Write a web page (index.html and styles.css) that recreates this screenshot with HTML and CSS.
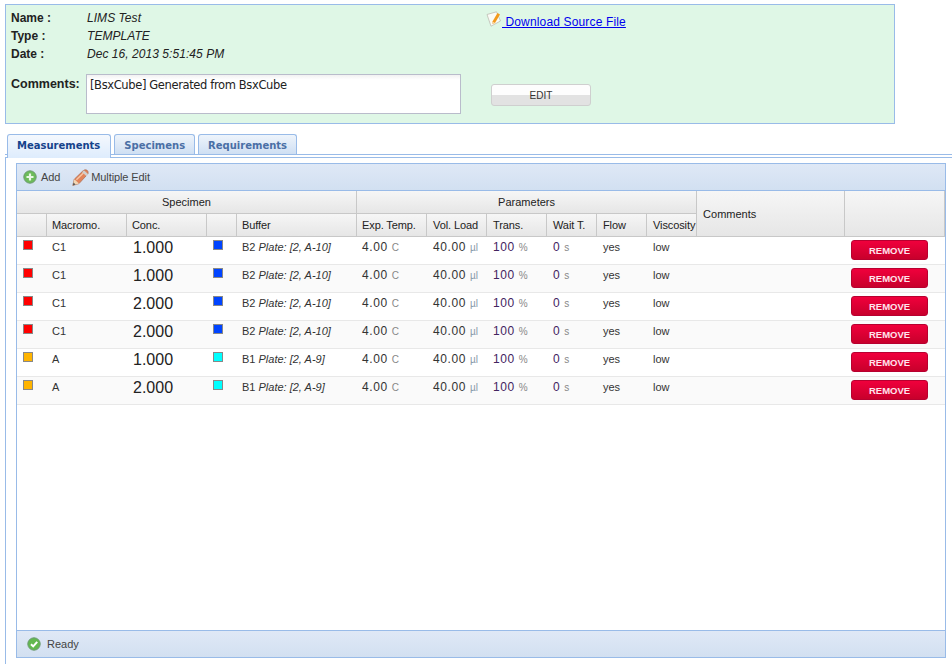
FILE: index.html
```html
<!DOCTYPE html>
<html>
  <head>
    <meta charset="utf-8" />
    <title>Experiment</title>
    <link rel="stylesheet" href="styles.css">
  </head>

  <body>
    <div class="summary">
      <div class="info">
        <div class="info-rows">
          <div class="info-row"><b>Name :</b><i>LIMS Test</i></div>
          <div class="info-row"><b>Type :</b><i>TEMPLATE</i></div>
          <div class="info-row"><b>Date :</b><i>Dec 16, 2013 5:51:45 PM</i></div>
        </div>
        <div class="comments">
          <b>Comments:</b>
          <div class="comments-box">[BsxCube] Generated from BsxCube</div>
        </div>
      </div>
      <div class="actions">
        <div class="download">
          <svg class="note-icon" width="16" height="16" viewBox="0 0 16 16">
            <path d="M1 3.5 L10.5 0.8 L14.5 10 L5 15.2 Z" fill="#fbfbf6" stroke="#bdbdb2" stroke-width="0.8"/>
            <path d="M6.5 10.5 L11.5 2 L14 3.4 L9 12 L6.5 13 Z" fill="#f39a1c"/>
            <path d="M6.5 10.5 L9 12 L6.5 13 Z" fill="#f7dcae"/>
          </svg>
          <a href="#">&nbsp;Download Source File</a>
        </div>
        <button class="edit-btn">EDIT</button>
      </div>
    </div>

    <div class="tabs">
      <span class="tab active">Measurements</span>
      <span class="tab">Specimens</span>
      <span class="tab">Requirements</span>
    </div>

    <div class="tab-body">
      <div class="grid-panel">
        <div class="toolbar">
          <span class="tool">
            <svg width="14" height="14" viewBox="0 0 14 14">
              <circle cx="7" cy="7" r="6.2" fill="#6cbb5a" stroke="#6d9a72"/>
              <path d="M7 3.5 V10.5 M3.5 7 H10.5" stroke="#e9f7e4" stroke-width="2.2"/>
            </svg>
            Add
          </span>
          <span class="tool">
            <svg width="17" height="17" viewBox="0 0 17 17">
              <path d="M0.8 16.4 L2.3 10.2 L11 1.8 Q12.8 0.2 14.8 1 Q16.8 2.6 16 4.8 L7 14.6 Z" fill="#e2835a" stroke="#a8694c" stroke-width="0.7"/>
              <path d="M4.4 10.8 L11.4 4" stroke="#f6c6a4" stroke-width="1.4"/>
              <path d="M11 2.2 L15.4 6.2" stroke="#cfcfcf" stroke-width="2.6"/>
              <path d="M0.8 16.4 L2.3 10.2 L7 14.6 Z" fill="#f2d7b5"/>
              <path d="M0.8 16.4 L1.5 13.6 L3.6 15.5 Z" fill="#555"/>
            </svg>
            Multiple Edit
          </span>
        </div>

        <table class="grid">
          <colgroup>
            <col class="c30"><col class="c80"><col class="c80"><col class="c30"><col class="c120">
            <col class="c70"><col class="c60"><col class="c60"><col class="c50"><col class="c50"><col class="c50">
            <col class="c148"><col class="c100">
          </colgroup>
          <thead>
            <tr class="group-row">
              <th colspan="5" class="center">Specimen</th>
              <th colspan="6" class="center">Parameters</th>
              <th rowspan="2" class="comments-head">Comments</th>
              <th rowspan="2"></th>
            </tr>
            <tr class="col-row">
              <th></th><th>Macromo.</th><th>Conc.</th><th></th><th>Buffer</th>
              <th>Exp. Temp.</th><th>Vol. Load</th><th>Trans.</th><th>Wait T.</th><th>Flow</th><th>Viscosity</th>
            </tr>
          </thead>
          <tbody>
            <tr>
              <td><span class="swatch red"></span></td><td>C1</td><td class="conc">1.000</td>
              <td><span class="swatch blue"></span></td><td>B2 <i>Plate: [2, A-10]</i></td>
              <td class="val">4.00 <span class="unit">C</span></td><td class="val">40.00 <span class="unit ul">µl</span></td><td class="val num">100 <span class="unit">%</span></td><td class="val num">0 <span class="unit">s</span></td><td>yes</td><td>low</td>
              <td></td><td><button class="remove-btn">REMOVE</button></td>
            </tr>
            <tr>
              <td><span class="swatch red"></span></td><td>C1</td><td class="conc">1.000</td>
              <td><span class="swatch blue"></span></td><td>B2 <i>Plate: [2, A-10]</i></td>
              <td class="val">4.00 <span class="unit">C</span></td><td class="val">40.00 <span class="unit ul">µl</span></td><td class="val num">100 <span class="unit">%</span></td><td class="val num">0 <span class="unit">s</span></td><td>yes</td><td>low</td>
              <td></td><td><button class="remove-btn">REMOVE</button></td>
            </tr>
            <tr>
              <td><span class="swatch red"></span></td><td>C1</td><td class="conc">2.000</td>
              <td><span class="swatch blue"></span></td><td>B2 <i>Plate: [2, A-10]</i></td>
              <td class="val">4.00 <span class="unit">C</span></td><td class="val">40.00 <span class="unit ul">µl</span></td><td class="val num">100 <span class="unit">%</span></td><td class="val num">0 <span class="unit">s</span></td><td>yes</td><td>low</td>
              <td></td><td><button class="remove-btn">REMOVE</button></td>
            </tr>
            <tr>
              <td><span class="swatch red"></span></td><td>C1</td><td class="conc">2.000</td>
              <td><span class="swatch blue"></span></td><td>B2 <i>Plate: [2, A-10]</i></td>
              <td class="val">4.00 <span class="unit">C</span></td><td class="val">40.00 <span class="unit ul">µl</span></td><td class="val num">100 <span class="unit">%</span></td><td class="val num">0 <span class="unit">s</span></td><td>yes</td><td>low</td>
              <td></td><td><button class="remove-btn">REMOVE</button></td>
            </tr>
            <tr>
              <td><span class="swatch orange"></span></td><td>A</td><td class="conc">1.000</td>
              <td><span class="swatch cyan"></span></td><td>B1 <i>Plate: [2, A-9]</i></td>
              <td class="val">4.00 <span class="unit">C</span></td><td class="val">40.00 <span class="unit ul">µl</span></td><td class="val num">100 <span class="unit">%</span></td><td class="val num">0 <span class="unit">s</span></td><td>yes</td><td>low</td>
              <td></td><td><button class="remove-btn">REMOVE</button></td>
            </tr>
            <tr>
              <td><span class="swatch orange"></span></td><td>A</td><td class="conc">2.000</td>
              <td><span class="swatch cyan"></span></td><td>B1 <i>Plate: [2, A-9]</i></td>
              <td class="val">4.00 <span class="unit">C</span></td><td class="val">40.00 <span class="unit ul">µl</span></td><td class="val num">100 <span class="unit">%</span></td><td class="val num">0 <span class="unit">s</span></td><td>yes</td><td>low</td>
              <td></td><td><button class="remove-btn">REMOVE</button></td>
            </tr>
          </tbody>
        </table>

        <div class="grid-space"></div>

        <div class="statusbar">
          <svg width="14" height="14" viewBox="0 0 14 14">
            <circle cx="7" cy="7" r="6.2" fill="#62b84f" stroke="#6d9a72"/>
            <path d="M4 7.2 L6.2 9.4 L10.2 4.8" fill="none" stroke="#fff" stroke-width="2"/>
          </svg>
          Ready
        </div>
      </div>
    </div>
  </body>
</html>
```

FILE: styles.css
```css
html, body {
  margin: 0;
  height: 667px;
  overflow: hidden;
  background: #fff;
}
body {
  font-family: "Liberation Sans", Arial, sans-serif;
  font-size: 11px;
  color: #222;
}
.summary {
  display: flex;
  box-sizing: border-box;
  width: 890px;
  height: 120px;
  margin: 4px 0 0 5px;
  border: 1px solid #99bbe8;
  background: #dff7e6;
}
.info {
  width: 481px;
  padding: 4px 0 0 5px;
  box-sizing: border-box;
}
.info-row {
  display: flex;
  height: 18px;
  line-height: 18px;
  font-size: 12px;
}
.info-row b {
  width: 75px;
}
.info-row i {
  padding-left: 1px;
  letter-spacing: 0.05px;
}
.comments {
  display: flex;
  margin-top: 11px;
  font-size: 12px;
}
.comments b {
  width: 75px;
  font-size: 12.5px;
  padding-top: 3px;
}
.comments-box {
  box-sizing: border-box;
  width: 375px;
  height: 40px;
  padding: 3px 3px;
  border: 1px solid #b9bccb;
  background: linear-gradient(#f2f2f2, #fff 5px);
  font-family: "DejaVu Sans", sans-serif;
  font-size: 11.5px;
  letter-spacing: -0.37px;
}
.actions {
  padding-top: 5px;
}
.download {
  display: flex;
  align-items: flex-start;
  height: 74px;
  font-size: 12px;
}
.download a {
  color: #0000ee;
  margin-top: 5px;
  letter-spacing: 0.15px;
}
.note-icon {
  margin-left: -1px;
  margin-top: 1px;
}
.edit-btn {
  display: block;
  box-sizing: border-box;
  width: 100px;
  height: 22px;
  margin-left: 4px;
  border: 1px solid #cfcfcf;
  border-radius: 3px;
  background: linear-gradient(#fdfdfd 50%, #e2e2e2 50%);
  font-family: "Liberation Sans", Arial, sans-serif;
  font-size: 10px;
  color: #333;
}
.tabs {
  display: flex;
  gap: 3px;
  height: 20px;
  margin: 10px 0 0 5px;
  padding-left: 2px;
  border-bottom: 1px solid #99bbe8;
}
.tab {
  box-sizing: border-box;
  height: 20px;
  padding: 5px 9px 0;
  border: 1px solid #99bbe8;
  border-bottom: 0;
  border-radius: 3px 3px 0 0;
  background: linear-gradient(#eef4fb, #cfdff3);
  font-family: "DejaVu Sans", sans-serif;
  font-weight: bold;
  font-size: 10px;
  color: #4a6fa5;
}
.tab.active {
  height: 24px;
  padding-right: 10px;
  position: relative;
  background: linear-gradient(#f4f8fd, #deecfd);
  color: #15428b;
}
.tab-body {
  box-sizing: border-box;
  height: 507px;
  margin: 2px 0 0 5px;
  padding: 5px 0 0 10px;
  border-left: 1px solid #99bbe8;
  border-top: 1px solid #99bbe8;
}
.grid-panel {
  display: flex;
  flex-direction: column;
  box-sizing: border-box;
  width: 930px;
  height: 495px;
  border: 1px solid #99bbe8;
}
.toolbar {
  display: flex;
  align-items: center;
  gap: 12px;
  height: 26px;
  padding-left: 6px;
  border-bottom: 1px solid #99bbe8;
  background: linear-gradient(#dfe8f6, #d2e0f1);
  color: #444;
}
.tool {
  display: flex;
  align-items: center;
  gap: 4px;
  letter-spacing: -0.1px;
}
.tool + .tool {
  gap: 2px;
}
.grid {
  table-layout: fixed;
  width: 928px;
  border-collapse: separate;
  border-spacing: 0;
}
.c30 { width: 30px; }
.c50 { width: 50px; }
.c60 { width: 60px; }
.c70 { width: 70px; }
.c80 { width: 80px; }
.c100 { width: 100px; }
.c120 { width: 120px; }
.c148 { width: 148px; }
.grid th {
  box-sizing: border-box;
  padding: 0 5px;
  border-right: 1px solid #c8c8c8;
  border-bottom: 1px solid #c8c8c8;
  background: linear-gradient(#f6f6f6, #e6e6e6);
  font-weight: normal;
  text-align: left;
  color: #222;
}
.grid th.center {
  text-align: center;
}
.grid th.comments-head {
  padding-left: 6px;
}
.group-row th {
  height: 23px;
}
.col-row th {
  height: 23px;
  letter-spacing: -0.1px;
}
.col-row th:nth-child(n+7) {
  padding: 0 0 0 6px;
}
.grid td {
  box-sizing: border-box;
  height: 28px;
  padding: 0 5px 7px;
  border-bottom: 1px solid #e8e8e8;
  white-space: nowrap;
  color: #333;
}
.grid td:nth-child(n+7) {
  padding-left: 6px;
}
.grid tbody tr:nth-child(even) td {
  background: #fafafa;
}
.grid td.conc {
  font-size: 16px;
  color: #222;
  padding-bottom: 5px;
  padding-left: 6px;
}
.grid td.val {
  font-size: 12px;
  letter-spacing: 0.6px;
}
.grid td.num {
  color: #43245f;
}
.unit {
  font-size: 10px;
  color: #888;
  letter-spacing: 0;
}
.unit.ul {
  color: #89a;
}
.swatch {
  display: block;
  box-sizing: border-box;
  width: 10px;
  height: 10px;
  margin: 0 0 4px 1px;
  border: 1px solid #888;
}
.red { background: #ff0000; }
.blue { background: #0044ff; }
.orange { background: #ffb400; }
.cyan { background: #00ffff; }
.remove-btn {
  display: block;
  box-sizing: border-box;
  width: 77px;
  height: 20px;
  margin: 3px 0 0 1px;
  border: 1px solid #b80030;
  border-radius: 3px;
  background: linear-gradient(#f0003c, #c8002c);
  font-family: "Liberation Sans", Arial, sans-serif;
  font-size: 9.5px;
  font-weight: bold;
  color: #ffe4ec;
}
.grid td:last-child {
  padding: 0 0 0 5px;
  vertical-align: top;
}
.grid-space {
  flex: 1;
}
.statusbar {
  display: flex;
  align-items: center;
  gap: 6px;
  height: 26px;
  padding-left: 10px;
  border-top: 1px solid #99bbe8;
  background: linear-gradient(#dfe8f6, #d2e0f1);
  color: #444;
}
```
